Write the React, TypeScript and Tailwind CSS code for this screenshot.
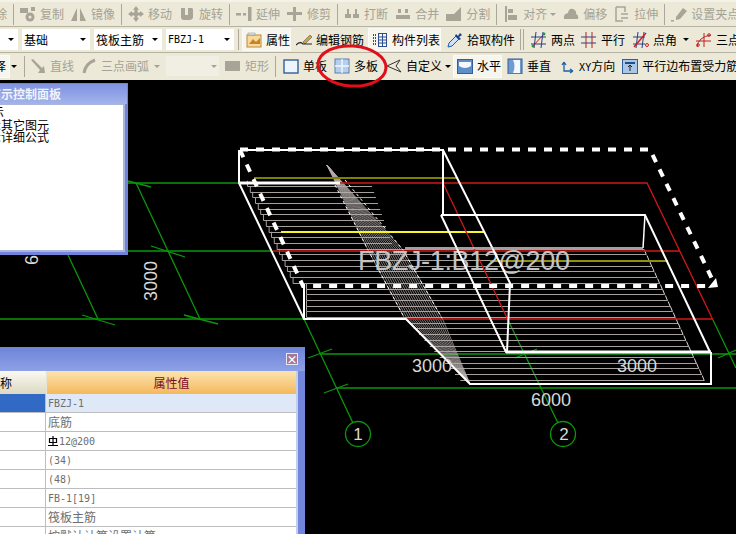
import type { ReactNode } from "react";

const GRAY = "#a8a496";

const Svg = ({ children }: { children: ReactNode }) => (
  <svg width="16" height="16" viewBox="0 0 16 16" className="shrink-0">
    {children}
  </svg>
);

// disabled toolbar icons
const icons: Record<string, ReactNode> = {
  copy: (
    <g fill={GRAY}>
      <rect x="0" y="2" width="8" height="5" />
      <rect x="11" y="1" width="4" height="4" />
      <circle cx="10" cy="11" r="4.5" />
      <circle cx="10" cy="11" r="1.5" fill="#ece9d8" />
    </g>
  ),
  mirror: (
    <g fill={GRAY}>
      <path d="M0 15 L6 2 L6 15 Z" />
      <path d="M9 2 L15 15 L9 15 Z" />
    </g>
  ),
  move: <path fill={GRAY} d="M8 0 L11 4 L9.5 4 L9.5 6.5 L12 6.5 L12 5 L16 8 L12 11 L12 9.5 L9.5 9.5 L9.5 12 L11 12 L8 16 L5 12 L6.5 12 L6.5 9.5 L4 9.5 L4 11 L0 8 L4 5 L4 6.5 L6.5 6.5 L6.5 4 L5 4 Z" />,
  rotate: <path fill={GRAY} d="M2 2 H6 V9 H9 V2 H13 Q14 2 14 4 V11 Q14 14 10 14 H5 Q2 14 2 11 Z" />,
  extend: (
    <g fill={GRAY}>
      <rect x="0" y="7" width="5" height="2.5" />
      <rect x="7" y="7" width="3" height="2.5" />
      <rect x="12" y="1" width="3.5" height="14" />
    </g>
  ),
  trim: (
    <g fill={GRAY}>
      <rect x="0" y="6" width="15" height="3" />
      <rect x="6" y="1" width="3" height="14" />
    </g>
  ),
  split: (
    <g fill={GRAY}>
      <rect x="1" y="8" width="6" height="4" />
      <rect x="9" y="8" width="6" height="4" />
      <rect x="3" y="3" width="2" height="5" />
      <rect x="11" y="3" width="2" height="5" />
    </g>
  ),
  merge: (
    <g fill={GRAY}>
      <rect x="1" y="9" width="14" height="4" />
      <rect x="3" y="3" width="3" height="4" />
      <rect x="10" y="3" width="3" height="4" />
    </g>
  ),
  cut: <path fill={GRAY} d="M0 8 L8 8 L15 1 L15 15 L0 15 Z" />,
  align: (
    <g fill={GRAY}>
      <rect x="2" y="0" width="2" height="16" />
      <rect x="5" y="3" width="5" height="4" />
      <rect x="5" y="9" width="9" height="5" />
    </g>
  ),
  cloud: <path fill={GRAY} d="M1 13 Q0 8 5 7 Q6 2 10 3 Q14 5 13 8 Q16 9 15 13 Z" />,
  stretch: (
    <g fill="none" stroke={GRAY} strokeWidth="1.5">
      <path d="M2 1 H11 V6 M2 1 V15 H9" />
      <path d="M7 8 H14 M7 12 H14" />
    </g>
  ),
  grip: (
    <g fill={GRAY}>
      <path d="M5 11 L12 2 L16 5 L9 13 L5 14 Z" />
      <rect x="0" y="14" width="3" height="1.5" />
    </g>
  ),
  diag: <path fill={GRAY} d="M1 2 L3 1 L12 10 L14 8 L15 15 L8 15 L10 12 Z" />,
  arc: <path fill="none" stroke={GRAY} strokeWidth="3" d="M3 15 Q4 6 14 2" />,
  rect: <rect x="0" y="3" width="15" height="10" fill={GRAY} />,
  props: (
    <g>
      <rect x="1" y="3" width="14" height="12" fill="#f7d99a" stroke="#b98a3a" />
      <path d="M3 12 L7 7 L10 10 L14 6 L14 12 Z" fill="#c9822a" />
      <rect x="2" y="1" width="7" height="2" fill="#e8e6dc" stroke="#888" strokeWidth="0.5" />
    </g>
  ),
  pencil: (
    <g>
      <path d="M7 10 L14 3 L16 5 L9 12 Z" fill="#c9a24a" stroke="#444" strokeWidth="0.5" />
      <path d="M0 13 Q4 9 7 12 H16" fill="none" stroke="#222" strokeWidth="1.2" />
    </g>
  ),
  list: (
    <g fill="none" stroke="#2c4f8f">
      <rect x="6.5" y="1.5" width="8" height="13" />
      <path d="M6.5 5 H14.5 M6.5 8 H14.5 M6.5 11 H14.5 M10.5 1.5 V14.5" />
      <path d="M1 3 H4 M1 6 H4 M1 9 H4 M1 12 H4" strokeDasharray="1 1" strokeWidth="2" />
    </g>
  ),
  dropper: (
    <g>
      <path d="M1 15 L2 11 L9 4 L12 7 L5 14 Z" fill="#cfe2fa" stroke="#1d59b8" />
      <path d="M9 2 L11 4 L13 1 L15 3 L12 5 L14 7 L12 8 L8 4 Z" fill="#143f8c" />
    </g>
  ),
  twoPoint: (
    <g fill="none">
      <path d="M0 5 H15 M0 12 H15 M5 0 L3 16 M12 0 L10 16" stroke="#2a3c8c" />
      <path d="M1 15 L14 1" stroke="#b02222" />
      <circle cx="2" cy="14" r="1.4" fill="#1f9a3a" />
      <circle cx="13" cy="2" r="1.4" fill="#1f9a3a" />
    </g>
  ),
  parallel: (
    <g fill="none">
      <path d="M0 5 H15 M0 11 H15" stroke="#2a3c8c" />
      <path d="M5 0 V16 M11 0 V16" stroke="#b02222" />
    </g>
  ),
  angle: (
    <g fill="none">
      <path d="M0 5 H12 M0 12 H12 M5 0 L3 16 M11 0 L9 16" stroke="#2a3c8c" />
      <path d="M1 15 L13 1" stroke="#d02020" strokeWidth="1.5" />
      <circle cx="14" cy="13" r="1.5" stroke="#d02020" />
    </g>
  ),
  threePoint: (
    <g fill="none">
      <path d="M1 15 Q2 5 15 3 M0 9 H15 M8 1 V15" stroke="#c02020" />
      <circle cx="2" cy="13" r="1.3" stroke="#c02020" />
      <circle cx="13" cy="3" r="1.3" stroke="#c02020" />
    </g>
  ),
  single: <rect x="1" y="2" width="14" height="13" fill="#eef4fc" stroke="#2e5f9f" strokeWidth="1.4" />,
  multi: (
    <g>
      <rect x="1" y="1" width="14" height="14" fill="#b5cfee" stroke="#5d80ab" />
      <path d="M8 1 V15 M1 8 H15" stroke="#f3f7fc" strokeWidth="1.4" />
    </g>
  ),
  custom: <path d="M1 8 L14 2 L10 8 L15 14 Z" fill="none" stroke="#333" />,
  horiz: (
    <g>
      <rect x="0.5" y="1.5" width="15" height="14" fill="#5f8fc8" stroke="#2e5f9f" />
      <path d="M2 4 H14 V8 Q8 12 2 8 Z" fill="#f5f8fc" />
    </g>
  ),
  vert: (
    <g>
      <rect x="1" y="1" width="14" height="15" fill="#6f9bd0" stroke="#2e5f9f" />
      <path d="M6 2 H13 V15 H6 Q9 8 6 2 Z" fill="#f5f8fc" />
    </g>
  ),
  xy: (
    <g fill="none" stroke="#1f5fae" strokeWidth="1.3">
      <path d="M5 4 V13 H14 M5 4 L3 7 M5 4 L7 7 M14 13 L11 11 M14 13 L11 15" />
    </g>
  ),
  edge: (
    <g>
      <rect x="0.5" y="1.5" width="15" height="14" fill="#a9c6e8" stroke="#2e5f9f" />
      <rect x="3" y="4" width="10" height="2" fill="#1f4f8f" />
      <path d="M8 7 V13 M6 9 L8 7 L10 9" stroke="#222" fill="none" />
    </g>
  ),
};

const Tool = ({ icon, label, off, className = "" }: { icon: string; label: ReactNode; off?: boolean; className?: string }) => (
  <div className={`flex items-center gap-[4px] shrink-0 whitespace-nowrap ${off ? "text-[#a5a294]" : "text-black"} ${className}`}>
    <Svg>{icons[icon]}</Svg>
    <span>{label}</span>
  </div>
);

const Sep = ({ className = "" }: { className?: string }) => (
  <div className={`w-[2px] h-[21px] shrink-0 border-l border-[#aca899] ${className}`} />
);

const Caret = ({ className = "", off }: { className?: string; off?: boolean }) => (
  <div className={`w-0 h-0 shrink-0 border-x-[3px] border-x-transparent border-t-[3px] ${off ? "border-t-[#a5a294]" : "border-t-black"} ${className}`} />
);

const Combo = ({ text, className = "", mono }: { text: string; className?: string; mono?: boolean }) => (
  <div className={`w-[68px] h-[21px] shrink-0 bg-white flex items-center justify-between pl-[2px] pr-[4px] ${className}`}>
    <span className={mono ? "font-['DejaVu_Sans_Mono',monospace] text-[10px]" : ""}>{text}</span>
    <Caret />
  </div>
);

const Toggled = ({ children, className = "" }: { children: ReactNode; className?: string }) => (
  <div className={`h-[23px] shrink-0 flex items-center px-[3px] bg-[#f6f5ee] border border-[#fbfaf5] ${className}`}>{children}</div>
);

const Toolbars = () => (
  <div className="shrink-0 h-[80px] bg-[#ece9d8] text-[12px] overflow-hidden">
    <div className="h-[27px] flex items-center gap-[7px] border-b border-[#b5b2a2] border-t-2 border-t-[#f5f3e8]">
      <span className="text-[#a5a294] -ml-[17px] shrink-0">删除</span>
      <Sep className="-mx-[1.5px]" />
      <Tool off icon="copy" label="复制" />
      <Tool off icon="mirror" label="镜像" />
      <Sep className="-mx-[1.5px]" />
      <Tool off icon="move" label="移动" />
      <Tool off icon="rotate" label="旋转" />
      <Sep className="-mx-[1.5px]" />
      <Tool off icon="extend" label="延伸" />
      <Tool off icon="trim" label="修剪" />
      <Sep className="-mx-[1.5px]" />
      <Tool off icon="split" label="打断" />
      <Tool off icon="merge" label="合并" />
      <Tool off icon="cut" label="分割" />
      <Sep className="-mx-[1.5px]" />
      <div className="flex items-center gap-[3px] shrink-0">
        <Tool off icon="align" label="对齐" />
        <Caret off />
      </div>
      <Tool off icon="cloud" label="偏移" />
      <Tool off icon="stretch" label="拉伸" />
      <Sep className="-mx-[1.5px]" />
      <Tool off icon="grip" label="设置夹点" />
    </div>

    <div className="h-[26px] flex items-center border-b border-[#b5b2a2]">
      <Combo text="" className="-ml-[50px]" />
      <Combo text="基础" className="ml-[4px]" />
      <Combo text="筏板主筋" className="ml-[4px]" />
      <Combo text="FBZJ-1" mono className="ml-[4px]" />
      <Sep className="ml-[4px]" />
      <Toggled className="ml-[2px] w-[49px]">
        <Tool icon="props" label="属性" className="gap-[3px]" />
      </Toggled>
      <Tool icon="pencil" label="编辑钢筋" className="ml-[5px]" />
      <Toggled className="ml-[4px] w-[73px]">
        <Tool icon="list" label="构件列表" className="gap-[3px]" />
      </Toggled>
      <Tool icon="dropper" label="拾取构件" className="ml-[6px] gap-[2px]" />
      <Sep className="ml-[5px]" />
      <Sep className="ml-[1px]" />
      <Tool icon="twoPoint" label="两点" className="ml-[6px]" />
      <Tool icon="parallel" label="平行" className="ml-[6px]" />
      <Tool icon="angle" label="点角" className="ml-[8px] gap-[3px]" />
      <Caret className="ml-[6px]" />
      <Tool icon="threePoint" label="三点" className="ml-[7px]" />
    </div>

    <div className="h-[26px] flex items-center">
      <Toggled className="-ml-[30px] w-[40px] justify-end pr-[3px]">
        <span>择</span>
      </Toggled>
      <Caret className="ml-[1px]" />
      <Sep className="ml-[7px]" />
      <Tool off icon="diag" label="直线" className="ml-[4px]" />
      <Tool off icon="arc" label="三点画弧" className="ml-[7px]" />
      <Caret off className="ml-[5px]" />
      <div className="ml-[6px] w-[53px] h-[20px] shrink-0 bg-[#f1efe4] flex items-center justify-end pr-[2px]">
        <Caret off />
      </div>
      <Tool off icon="rect" label="矩形" className="ml-[6px] gap-[3px]" />
      <Sep className="ml-[6px]" />
      <Tool icon="single" label="单板" className="ml-[6px]" />
      <Tool icon="multi" label="多板" className="ml-[7px]" />
      <Tool icon="custom" label="自定义" className="ml-[8px]" />
      <Caret className="ml-[3px]" />
      <Toggled className="ml-[2px] w-[49px]">
        <Tool icon="horiz" label="水平" className="gap-[3px]" />
      </Toggled>
      <Tool icon="vert" label="垂直" className="ml-[5px]" />
      <Tool
        icon="xy"
        label={
          <>
            <span className="font-['DejaVu_Sans_Mono',monospace] text-[10px]">XY</span>方向
          </>
        }
        className="ml-[8px]"
      />
      <Tool icon="edge" label="平行边布置受力筋" className="ml-[7px]" />
    </div>
  </div>
);

// hatch of the rebar lines, page coordinates
const rows: number[] = [];
for (let y = 186; y < 384; y += 5.7) rows.push(Math.round(y));

const leftEdge = (y: number) => (y < 286 ? 247 + (y - 186) * 0.47 : y < 319 ? 306 : 405 + (y - 319) * 0.9);
const rightEdge = (y: number) => (y < 248 ? 373 + (y - 190) * 0.35 : 643 + (y - 248) * 0.46);

const L = [[327, 165], [368, 250], [405, 319], [470, 384]];
const R = [[327, 165], [403, 250], [443, 320], [470, 384]];
const band: string[] = [];
for (let i = 0; i <= 16; i++) {
  const t = i / 16;
  band.push(L.map((p, k) => `${p[0] + (R[k][0] - p[0]) * t},${p[1] + (R[k][1] - p[1]) * t}`).join(" "));
}

const GREEN = "#0c960c";

const Drawing = () => (
  <svg className="absolute inset-0" width="736" height="454" viewBox="0 80 736 454" fontFamily="'Liberation Sans', sans-serif">
    <g stroke={GREEN} strokeWidth="1.3" fill="none">
      <path d="M128 183 H240 M128 251 H272 M0 319 H304 M320 354 H736 M336 388 H736" />
      <path d="M136 183 L200 319 M68 255 L98 319 M304 319 L353 423 M508 320 L558 423 M713 320 L736 368" />
      <path d="M128 181 L151 187 M151 246 L185 257 M184 315 L218 324 M82 315 L115 325" />
      <path d="M308 358 L332 349 M324 393 L348 384 M515 358 L537 349 M718 358 L736 350" />
      <circle cx="358" cy="434" r="12.5" />
      <circle cx="563" cy="434" r="12.5" />
    </g>

    <g stroke="#a79f9c" transform="translate(0.5 0.5)">
      {rows.map((y) => (
        <path key={y} d={`M${leftEdge(y)} ${y} H${rightEdge(y)}`} />
      ))}
      {rows.filter((y) => y < 319).map((y) => (
        <path key={y} d={`M${leftEdge(y)} ${y - 5.7} V${y}`} />
      ))}
      {rows.filter((y) => y > 250).map((y) => (
        <path key={y} stroke="#d8d8d8" d={`M${rightEdge(y) - 2} ${y - 5} L${rightEdge(y)} ${y}`} />
      ))}
    </g>
    <g stroke="#b5aeac" strokeWidth="0.7" fill="none">
      {band.map((p) => (
        <polyline key={p} points={p} />
      ))}
    </g>
    <g stroke="#fff" fill="none" strokeDasharray="3 3">
      <path d="M335 185 L368 250 L405 319" />
      <path d="M345 180 L403 250 L443 320" />
    </g>

    <g fill="none">
      <path d="M254 178 H457" stroke="#808000" strokeWidth="2" />
      <path d="M281 232 H484" stroke="#f5f528" strokeWidth="2" />
      <path d="M490 261 H668" stroke="#8f8f10" strokeWidth="2" />
      <path d="M340 183 H647 L713 320 M443 183 L508 320 M273 251 H680 M405 319 H713" stroke="#d01818" strokeWidth="1.3" />
    </g>

    <text x="358" y="270" fontSize="27" fill="#c4c4c4" textLength="212">FBZJ-1:B12@200</text>

    <g fill="none" stroke="#fff" strokeWidth="2">
      <path d="M240 150 H443 V215 M239 150 V183 L304 319 H406 L470 384 H711 V352 M304 286 V319" />
      <path d="M443 150 L510 283 L507 352 M441 215 H645 L710 352 M441 215 L506 352 H711" />
      <path d="M240 183 H340" strokeWidth="3" />
      <path d="M506 352 H711" strokeWidth="3" />
      <path d="M645 215 L643 248" strokeWidth="1.5" />
      <path d="M643 248 H405" stroke="#d8d4d4" strokeWidth="1.5" />
    </g>
    <g fill="none" stroke="#fff" strokeWidth="4">
      <path d="M240 149.5 H650 L715 285" strokeDasharray="8 8" />
      <path d="M240 150 L303 286 H712" strokeDasharray="8 8" />
    </g>
    <path d="M708 288 L716 278 L718 287 Z" fill="#fff" />

    <g fill="#d8d8d8" fontSize="18">
      <text x="412" y="372">3000</text>
      <text x="617" y="372">3000</text>
      <text x="531" y="406">6000</text>
      <text transform="translate(157 301) rotate(-90)">3000</text>
      <text transform="translate(38 265) rotate(-90)">6000</text>
      <text x="358" y="440" fontSize="17" textAnchor="middle">1</text>
      <text x="564" y="440" fontSize="17" textAnchor="middle">2</text>
    </g>
  </svg>
);

const ControlPanel = () => (
  <div className="absolute left-[-72px] top-[3px] w-[200px] h-[172px] bg-[#6f84da] p-[1px] flex flex-col">
    <div className="h-[20px] shrink-0 pl-[60px] flex items-center font-bold text-[12px] text-[#f0f3fb] bg-gradient-to-b from-[#7f93e0] to-[#a3b3ec]">
      演示控制面板
    </div>
    <div className="flex-1 bg-white border-t border-x-2 border-b-2 border-[#a9b6d8] mr-[2px] mb-[2px] pl-[46px] pt-[1px] text-[12px] leading-[12.5px] text-black">
      <div className="pl-[3px]">显示</div>
      <div>显示其它图元</div>
      <div>显示详细公式</div>
    </div>
  </div>
);

const RebarMark = () => (
  <svg width="10" height="11" viewBox="0 0 10 11" className="shrink-0">
    <path d="M1.5 2.5 H8.5 V6.5 H1.5 Z M5 0 V9 M0 9.5 H10" fill="none" stroke="#000" strokeWidth="1.2" />
  </svg>
);

const MONO = "font-['DejaVu_Sans_Mono',monospace] text-[10px]";
const propRows: { value: ReactNode; cls: string }[] = [
  { value: "FBZJ-1", cls: MONO },
  { value: "底筋", cls: "text-[12px]" },
  {
    value: (
      <>
        <RebarMark />
        <span className="ml-[1px]">12@200</span>
      </>
    ),
    cls: MONO,
  },
  { value: "(34)", cls: MONO },
  { value: "(48)", cls: MONO },
  { value: "FB-1[19]", cls: MONO },
  { value: "筏板主筋", cls: "text-[12px]" },
  { value: "按默认计算设置计算", cls: "text-[12px]" },
];

const PropertyPanel = () => (
  <div className="absolute left-0 top-[267px] w-[305px] h-[187px] overflow-hidden bg-gradient-to-r from-[#7f93e0] to-[#7186dc] flex flex-col">
    <div className="h-[24px] shrink-0 flex items-center justify-end pr-[7px] bg-gradient-to-b from-[#6d84d8] to-[#8ea1e6]">
      <div className="w-[12px] h-[12px] bg-[#a8788f] border border-[#e8e8f4] flex items-center justify-center text-white text-[11px] font-bold leading-none">
        ×
      </div>
    </div>
    <div className="mr-[7px] bg-white border-r-2 border-[#c3cfe8] flex-1">
      <div className="flex h-[23px]">
        <div className="w-[46px] shrink-0 bg-gradient-to-b from-[#fbfaf3] to-[#dcd8c2] text-[12px] flex items-center overflow-hidden">
          <span>称</span>
        </div>
        <div className="flex-1 bg-gradient-to-b from-[#fbe4ac] to-[#f4b95c] border-l border-[#e8e4d4] text-[12px] text-[#7a0a2a] flex items-center justify-center">
          属性值
        </div>
      </div>
      {propRows.map((row, i) => (
        <div key={i} className="flex h-[19px] border-b border-[#bdbdbd]">
          <div className={`w-[46px] shrink-0 border-r border-[#bdbdbd] ${i === 0 ? "bg-[#316ac5]" : "bg-white"}`} />
          <div className={`flex-1 flex items-center pl-[2px] text-[#6e6e6e] whitespace-nowrap ${row.cls} ${i === 0 ? "bg-[#dfe8f6]" : "bg-white"}`}>
            {row.value}
          </div>
        </div>
      ))}
    </div>
  </div>
);

export default function App() {
  return (
    <div className="relative w-[736px] h-[534px] overflow-hidden bg-black flex flex-col font-['Noto_Sans_CJK_SC','Liberation_Sans',sans-serif]">
      <Toolbars />
      <div className="relative flex-1">
        <Drawing />
        <ControlPanel />
        <PropertyPanel />
      </div>
      {/* hand drawn red mark around the button */}
      <svg className="absolute left-[310px] top-[40px]" width="84" height="54" viewBox="0 0 84 54">
        <ellipse cx="42" cy="26" rx="34" ry="20" fill="none" stroke="#e0101a" strokeWidth="3" transform="rotate(4 42 26)" />
      </svg>
    </div>
  );
}
